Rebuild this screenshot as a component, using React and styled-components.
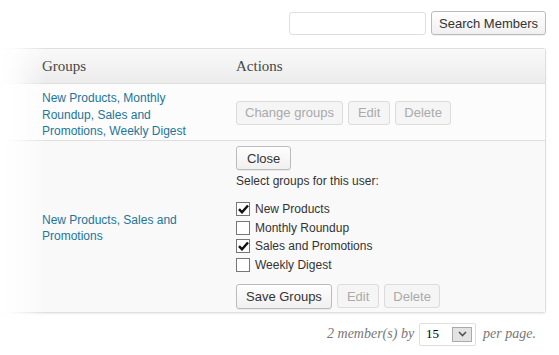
import React from 'react'
import styled, { createGlobalStyle, css } from 'styled-components'

const Global = createGlobalStyle`
  html, body { margin: 0; background: #fff; }
  body { font-family: "Liberation Sans", Arial, sans-serif; font-size: 13px; color: #333; }
`

const Page = styled.div`
  width: 559px;
  height: 355px;
  box-sizing: border-box;
  padding: 11px 13px 0 0;
  overflow: hidden;
`

const Toolbar = styled.div`
  display: flex;
  justify-content: flex-end;
  align-items: center;
  gap: 5px;
`

const SearchInput = styled.input`
  width: 137px;
  height: 23px;
  box-sizing: border-box;
  border: 1px solid #dfdfdf;
  border-radius: 3px;
  background: #fff;
  margin-top: 1px;
`

const Button = styled.button`
  font-family: "Liberation Sans", Arial, sans-serif;
  font-size: 13px;
  height: ${p => p.$h || 24}px;
  padding: 0 ${p => p.$px || 8}px;
  border-radius: 3px;
  box-sizing: border-box;
  border: 1px solid #bbb;
  color: #333;
  background: linear-gradient(#fefefe, #f0f0f0);
  box-shadow: 0 1px 0 rgba(0,0,0,0.06);
  ${p => p.disabled && css`
    border-color: #dcdcdc;
    color: #aaa;
    background: #f5f5f5;
    box-shadow: none;
  `}
`

const Table = styled.div`
  position: relative;
  margin-top: 13px;
  border: 1px solid #dfdfdf;
  border-left: none;
  border-radius: 0 3px 3px 0;
  box-shadow: 0 1px 2px rgba(0,0,0,0.08);
  &::after {
    content: "";
    position: absolute;
    left: 0; top: -1px; bottom: -3px;
    width: 46px;
    background: linear-gradient(to right, #fff 0%, rgba(255,255,255,0.85) 30%, rgba(255,255,255,0) 100%);
    pointer-events: none;
  }
`

const Row = styled.div`
  display: grid;
  grid-template-columns: 236px 1fr;
  background: ${p => p.$bg};
  border-top: ${p => (p.$first ? 'none' : '1px solid #dfdfdf')};
  min-height: ${p => p.$h}px;
`

const HeadRow = styled(Row)`
  background: linear-gradient(#f9f9f9, #ececec);
  height: 34px;
  align-items: center;
`

const HeadCell = styled.div`
  font-family: "Liberation Serif", Georgia, serif;
  font-size: 15px;
  color: #464646;
  padding-left: ${p => p.$pl || 0}px;
  padding-top: 1px;
`

const GroupCell = styled.div`
  padding: ${p => p.$pt || 0}px 20px 0 42px;
  align-self: ${p => p.$align || 'center'};
  font-size: 12px;
  line-height: 16.5px;
  color: #21759b;
`

const Actions = styled.div`
  display: flex;
  align-items: center;
  gap: 5px;
  padding-top: ${p => p.$pt || 0}px;
`

const Editor = styled.div`
  display: flex;
  flex-direction: column;
  align-items: flex-start;
  padding: 5px 0 3px;
`

const Hint = styled.div`
  font-size: 12px;
  margin: 4px 0 14px;
  color: #333;
`

const CheckList = styled.div`
  display: flex;
  flex-direction: column;
  gap: 4.5px;
  margin-bottom: 12px;
`

const CheckRow = styled.label`
  display: flex;
  align-items: center;
  gap: 5px;
  font-size: 12px;
  color: #333;
  height: 14px;
`

const Box = styled.span`
  width: 14px;
  height: 14px;
  box-sizing: border-box;
  border: 1px solid #777;
  background: #fff;
  display: flex;
  align-items: center;
  justify-content: center;
`

const Footer = styled.div`
  display: flex;
  justify-content: flex-end;
  align-items: center;
  gap: 5px;
  margin-top: 10px;
  padding-right: 10px;
  font-family: "Liberation Serif", Georgia, serif;
  font-style: italic;
  font-size: 14px;
  color: #777;
`

const Select = styled.div`
  width: 57px;
  height: 23px;
  box-sizing: border-box;
  border: 1px solid #dfdfdf;
  border-radius: 2px;
  background: #fff;
  display: flex;
  align-items: center;
  justify-content: space-between;
  padding: 0 3px 0 6px;
  font-style: normal;
  font-family: "Liberation Serif", Georgia, serif;
  font-size: 13px;
  color: #000;
  margin-right: 2px;
`

const Arrow = styled.span`
  width: 20px;
  height: 15px;
  box-sizing: border-box;
  border: 1px solid #aaa;
  background: #e3e3e3;
  display: flex;
  align-items: center;
  justify-content: center;
`

const Check = ({ on, label }) => (
  <CheckRow>
    <Box>
      {on && (
        <svg width="11" height="10" viewBox="0 0 11 10">
          <path d="M1 5.2 L4 8.3 L10 1.5" fill="none" stroke="#111" strokeWidth="2.4" />
        </svg>
      )}
    </Box>
    {label}
  </CheckRow>
)

export default function App() {
  return (
    <Page>
      <Global />
      <Toolbar>
        <SearchInput />
        <Button $px={7}>Search Members</Button>
      </Toolbar>
      <Table>
        <HeadRow $first>
          <HeadCell $pl={42}>Groups</HeadCell>
          <HeadCell>Actions</HeadCell>
        </HeadRow>
        <Row $bg="#fcfcfc" $h={56}>
          <GroupCell $align="start" $pt={6}>
            New Products, Monthly Roundup, Sales and Promotions, Weekly Digest
          </GroupCell>
          <Actions $pt={1}>
            <Button disabled $px={8}>Change groups</Button>
            <Button disabled $px={9}>Edit</Button>
            <Button disabled $px={8}>Delete</Button>
          </Actions>
        </Row>
        <Row $bg="#f9f9f9">
          <GroupCell $pt={4}>New Products, Sales and Promotions</GroupCell>
          <Editor>
            <Button $px={10}>Close</Button>
            <Hint>Select groups for this user:</Hint>
            <CheckList>
              <Check on label="New Products" />
              <Check label="Monthly Roundup" />
              <Check on label="Sales and Promotions" />
              <Check label="Weekly Digest" />
            </CheckList>
            <Actions>
              <Button $h={25} $px={9}>Save Groups</Button>
              <Button disabled $px={9}>Edit</Button>
              <Button disabled $px={8}>Delete</Button>
            </Actions>
          </Editor>
        </Row>
      </Table>
      <Footer>
        <span>2 member(s) by</span>
        <Select>
          <span>15</span>
          <Arrow>
            <svg width="9" height="6" viewBox="0 0 9 6">
              <path d="M1 1 L4.5 4.5 L8 1" fill="none" stroke="#555" strokeWidth="1.6" />
            </svg>
          </Arrow>
        </Select>
        <span>per page.</span>
      </Footer>
    </Page>
  )
}
